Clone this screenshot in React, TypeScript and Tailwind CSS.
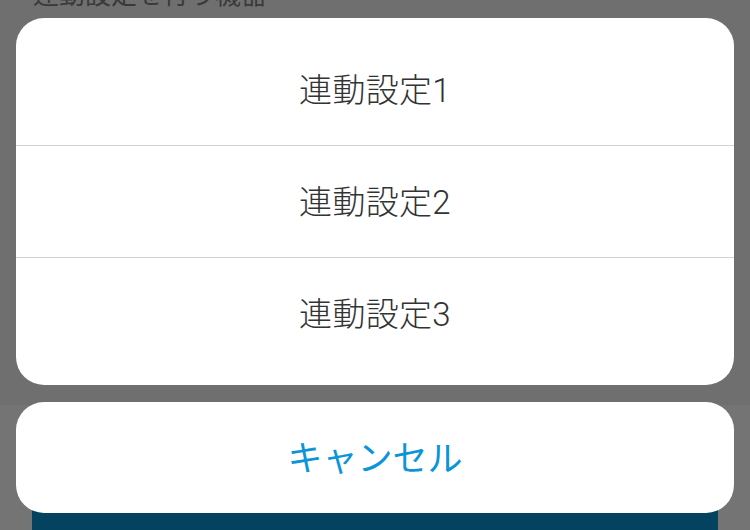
import React from 'react'

const font = { fontFamily: 'Roboto, "Noto Sans CJK JP", sans-serif' }

const options = ['連動設定1', '連動設定2', '連動設定3']

const App = () => {
  return (
    <div className="relative h-[530px] w-[750px] overflow-hidden bg-[#6f6f6f]" style={font}>
      {/* dimmed page underneath */}
      <div className="flex h-full flex-col">
        <div className="flow-root h-[405px] shrink-0">
          <p className="mt-[-22px] pl-[33px] text-[26px] leading-[34px] text-[#3a3a3a]">連動設定を行う機器</p>
        </div>
        <div className="flex-1 bg-[#747474] pt-[95px]">
          <div className="mx-8 h-[80px] rounded-lg bg-[#03435f]"></div>
        </div>
      </div>

      {/* action sheet */}
      <div className="absolute inset-0 flex flex-col gap-[17px] px-4 pt-[18px]">
        <div className="flex flex-col rounded-[28px] bg-white py-4">
          {options.map((label, i) => (
            <React.Fragment key={label}>
              {i > 0 && <div className="h-[1px] bg-[#d2d2d2]"></div>}
              <button className="flex h-[111px] items-center justify-center pt-[2px] text-[33px] font-light tracking-[0.3px] text-[#333333]">
                {label}
              </button>
            </React.Fragment>
          ))}
        </div>
        <button className="flex h-[111px] items-center justify-center rounded-[28px] bg-white pt-[6px] text-[35px] text-[#0b95d8]">
          キャンセル
        </button>
      </div>
    </div>
  )
}

export default App
